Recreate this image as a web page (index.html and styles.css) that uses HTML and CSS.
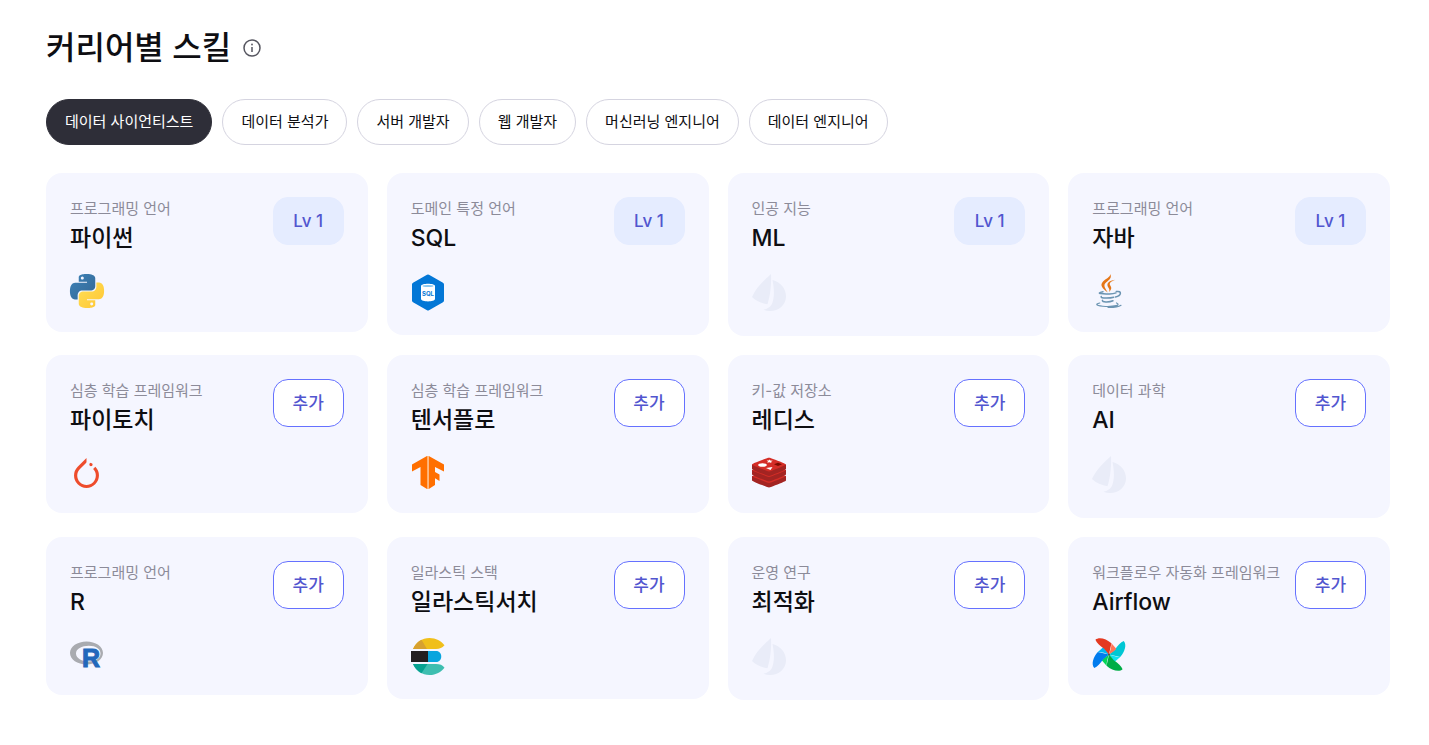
FILE: index.html
```html
<!DOCTYPE html>
<html lang="ko">
<head>
<meta charset="utf-8">
<meta name="viewport" content="width=device-width, initial-scale=1">
<title>커리어별 스킬</title>
<link rel="stylesheet" href="styles.css">
</head>
<body>
<svg class="defs" width="0" height="0" aria-hidden="true">
  <symbol id="boat" viewBox="0 0 34 38">
    <path fill="#e9ecf8" d="M19 0C13 5.500 4 13.500 0 23c4 4 10 6.500 15.500 7.200C18.300 22 19.600 9 19 0Z"/>
    <path fill="#e9ecf8" d="M20.500 6C29 8.200 34 15 34 22.500c0 10.500-11.500 17.500-22.500 13.300 4-1 6.300-2.500 8-5C22.600 25 22.400 15 20.500 6Z"/>
  </symbol>
</svg>
<main class="page">
  <header class="heading">
    <h1 class="heading-title">커리어별 스킬</h1>
    <button class="info" type="button" aria-label="안내">
      <svg width="18" height="18" viewBox="0 0 18 18" fill="none"><circle cx="9" cy="9" r="8" stroke="#55555f" stroke-width="1.500"/><path d="M9 8v5" stroke="#55555f" stroke-width="1.500"/><circle cx="9" cy="5.500" r=".9" fill="#55555f"/></svg>
    </button>
  </header>

  <nav class="filters" aria-label="커리어">
    <button class="filter filter-active" type="button" aria-pressed="true">데이터 사이언티스트</button>
    <button class="filter" type="button">데이터 분석가</button>
    <button class="filter" type="button">서버 개발자</button>
    <button class="filter" type="button">웹 개발자</button>
    <button class="filter" type="button">머신러닝 엔지니어</button>
    <button class="filter" type="button">데이터 엔지니어</button>
  </nav>

  <section class="grid">
    <article class="card">
      <div class="card-top">
        <div class="card-text"><p class="category">프로그래밍 언어</p><h2 class="name">파이썬</h2></div>
        <button class="action action-level" type="button">Lv 1</button>
      </div>
      <svg class="logo" width="34" height="34" viewBox="0 0 24 24">
        <defs>
          <linearGradient id="pyb" x1="0" y1="0" x2="1" y2="1"><stop offset="0" stop-color="#3d83b9"/><stop offset="1" stop-color="#346794"/></linearGradient>
          <linearGradient id="pyy" x1="1" y1="1" x2="0" y2="0"><stop offset="0" stop-color="#ffe058"/><stop offset="1" stop-color="#ffc533"/></linearGradient>
          <path id="snake" d="M14.25.18l.9.2.73.26.59.3.45.32.34.34.25.34.16.33.1.3.04.26.02.2-.01.13V8.5l-.05.63-.13.55-.21.46-.26.38-.3.31-.33.25-.35.19-.35.14-.33.1-.3.07-.26.04-.21.02H8.770l-.69.05-.59.14-.5.22-.41.27-.33.32-.27.35-.2.36-.15.37-.1.35-.07.32-.04.27-.02.21v3.060H3.170l-.21-.03-.28-.07-.32-.12-.35-.18-.36-.26-.36-.36-.35-.46-.32-.59-.28-.73-.21-.88-.14-1.050-.05-1.230.06-1.220.16-1.040.24-.87.32-.71.36-.57.4-.44.42-.33.42-.24.4-.16.36-.1.32-.05.24-.01h.16l.06.01h8.160v-.83H6.180l-.01-2.750-.02-.37.05-.34.11-.31.17-.28.25-.26.31-.23.38-.2.44-.18.51-.15.58-.12.64-.1.71-.06.77-.04.84-.02 1.270.05zm-6.300 1.980l-.23.33-.08.41.08.41.23.34.33.22.41.09.41-.09.33-.22.23-.34.08-.41-.08-.41-.23-.33-.33-.22-.41-.09-.41.09z"/>
        </defs>
        <use href="#snake" fill="url(#pyb)"/><use href="#snake" fill="url(#pyy)" transform="rotate(180 12 12)"/>
      </svg>
    </article>

    <article class="card">
      <div class="card-top">
        <div class="card-text"><p class="category">도메인 특정 언어</p><h2 class="name">SQL</h2></div>
        <button class="action action-level" type="button">Lv 1</button>
      </div>
      <svg class="logo" width="34" height="37" viewBox="0 0 34 37">
        <path fill="#0377d6" stroke="#0377d6" stroke-width="4" stroke-linejoin="round" d="M17 2.500 31 10.500V26.500L17 34.500 3 26.500V10.500Z"/>
        <path fill="#fff" d="M10 12v13c0 3.200 14 3.200 14 0V12c0-3-14-3-14 0Z"/>
        <ellipse cx="17" cy="12" rx="5.500" ry="1.100" fill="#8ac8f0"/>
        <text x="17" y="22" class="sql-mark">SQL</text>
      </svg>
    </article>

    <article class="card">
      <div class="card-top">
        <div class="card-text"><p class="category">인공 지능</p><h2 class="name">ML</h2></div>
        <button class="action action-level" type="button">Lv 1</button>
      </div>
      <svg class="logo" width="34" height="38"><use href="#boat"/></svg>
    </article>

    <article class="card">
      <div class="card-top">
        <div class="card-text"><p class="category">프로그래밍 언어</p><h2 class="name">자바</h2></div>
        <button class="action action-level" type="button">Lv 1</button>
      </div>
      <svg class="logo" width="34" height="34" viewBox="0 0 34 34" fill="none" stroke-linecap="round">
        <path fill="#e57617" d="M18.300 0c1.800 4-1.200 6-4 8.200-3 2.500-2.200 4.500 1.500 10.200-5.600-4.200-8.300-7.200-4.800-11 2.800-2.700 7.200-4.200 7.300-7.400Z"/>
        <path fill="#e57617" d="M23.300 5.800c-5 2-6.300 3.500-5 5.800 1.700 2.300 1.200 4-1.300 6.600.7-2 .6-2.800-.7-4.700-2.500-3.800.5-6.900 7-7.700Z"/>
        <g stroke="#6b94b2" stroke-width="1.500">
          <path d="M11 17.700c-9 1.800 1 2.500 6.500 2.200 2.500-.1 5-.5 6.500-1"/>
          <path d="M24.300 17.600c6-1.300 5.200 4.500-.8 5.400"/>
          <path d="M9.200 22.500c-1 2.200 9 1.800 12.500.8M10.500 26.300c-1 2 6.500 2.200 10.500.5"/>
          <path d="M7.800 29c-5.500 1.200-3.500 3.100 6 3.500 8.500.2 15.500-1.200 10.700-3.500M16 33.500c5.500.1 10.500-.5 13-2.200" stroke-width="1.200"/>
        </g>
      </svg>
    </article>

    <article class="card">
      <div class="card-top">
        <div class="card-text"><p class="category">심층 학습 프레임워크</p><h2 class="name">파이토치</h2></div>
        <button class="action" type="button">추가</button>
      </div>
      <svg class="logo" width="34" height="33" viewBox="0 0 34 33">
        <path fill="#ee4c2c" transform="translate(1.500 2) scale(1.250)" d="M12.005 0L4.952 7.053a9.865 9.865 0 000 14.022 9.866 9.866 0 0014.022 0c3.984-3.900 3.986-10.205.085-14.023l-1.744 1.743c2.904 2.905 2.904 7.634 0 10.538s-7.634 2.904-10.538 0-2.904-7.634 0-10.538l4.647-4.646.582-.665zm3.568 3.899a1.327 1.327 0 00-1.327 1.327 1.327 1.327 0 001.327 1.328A1.327 1.327 0 0016.900 5.226 1.327 1.327 0 0015.573 3.900z"/>
      </svg>
    </article>

    <article class="card">
      <div class="card-top">
        <div class="card-text"><p class="category">심층 학습 프레임워크</p><h2 class="name">텐서플로</h2></div>
        <button class="action" type="button">추가</button>
      </div>
      <svg class="logo" width="34" height="33" viewBox="0 0 34 33">
        <path fill="#ff6f00" d="M16 0 1 8.500v7l8.500-4.500v18L16 33Z"/>
        <path fill="#ff6f00" d="M17.800 0 33 8.500v7L24 11v5l4.500 2.500v6.500L24 22.300V29l-6.200 4Z"/>
        <path fill="#ffb06f" d="M16 0h1.800v33H16Z"/>
      </svg>
    </article>

    <article class="card">
      <div class="card-top">
        <div class="card-text"><p class="category">키-값 저장소</p><h2 class="name">레디스</h2></div>
        <button class="action" type="button">추가</button>
      </div>
      <svg class="logo" width="34" height="33" viewBox="0 0 34 33">
        <path fill="#a32422" d="M0 20v4.500c1.500 1.500 10 4.500 15 6.500 1.500.6 2.500.6 4 0 5-2 13.500-5 15-6.500V20Z"/>
        <path fill="#d42d27" d="M0 20l17-6 17 6c-1 1.300-10 4.500-15 6.500-1.500.6-2.500.6-4 0C10 24.500 1 21.300 0 20Z"/>
        <path fill="#a32422" d="M0 14v4.500c1.500 1.500 10 4.500 15 6.500 1.500.6 2.500.6 4 0 5-2 13.500-5 15-6.500V14Z"/>
        <path fill="#d42d27" d="M0 14l17-6 17 6c-1 1.300-10 4.500-15 6.500-1.500.6-2.500.6-4 0C10 18.500 1 15.300 0 14Z"/>
        <path fill="#a32422" d="M0 8.500V13c1.500 1.500 10 4.500 15 6.500 1.500.6 2.500.6 4 0 5-2 13.500-5 15-6.500V8.500Z"/>
        <path fill="#d42d27" d="M0 8.500C1 7.200 10 4 15 2.200c1.500-.5 2.500-.5 4 0 5 1.800 14 5 15 6.300-1 1.300-10 4.500-15 6.500-1.500.6-2.500.6-4 0C10 13 1 9.800 0 8.500Z"/>
        <ellipse cx="10.500" cy="9" rx="4.300" ry="1.800" fill="#fff"/>
        <path fill="#fff" d="m14 12 6.500-1-2 3Zm.6-7.600 2 .2 1-1.200.7 1.200 2.500.1-1.700 1 .3 1.200-2-.7-2.200.6.800-1.200Z"/>
        <path fill="#7a0c00" d="m22 8.300 4-1.600 4 1.600-4 1.700Z"/>
      </svg>
    </article>

    <article class="card">
      <div class="card-top">
        <div class="card-text"><p class="category">데이터 과학</p><h2 class="name">AI</h2></div>
        <button class="action" type="button">추가</button>
      </div>
      <svg class="logo" width="34" height="38"><use href="#boat"/></svg>
    </article>

    <article class="card">
      <div class="card-top">
        <div class="card-text"><p class="category">프로그래밍 언어</p><h2 class="name">R</h2></div>
        <button class="action" type="button">추가</button>
      </div>
      <svg class="logo" width="34" height="33" viewBox="0 0 34 33">
        <path fill="#a9abb0" fill-rule="evenodd" d="M16.500 3.500C25.600 3.500 33 8.500 33 15s-7.400 11.500-16.500 11.500S0 21.500 0 15 7.400 3.500 16.500 3.500Zm2.300 4.300C11.700 7.800 6 11 6 15.500s5.700 8 12.800 8S30.500 20 30.500 15.500s-4.600-7.700-11.700-7.700Z"/>
        <text x="12" y="29" class="r-mark">R</text>
      </svg>
    </article>

    <article class="card">
      <div class="card-top">
        <div class="card-text"><p class="category">일라스틱 스택</p><h2 class="name">일라스틱서치</h2></div>
        <button class="action" type="button">추가</button>
      </div>
      <svg class="logo" width="34" height="37" viewBox="0 0 34 37">
        <path fill="#f0bf1a" d="M2 11C5 4 11 0 18.500 0 25 0 30 3 33.500 7.300 31 10 29 11 25 11Z"/>
        <path fill="#d7a12f" d="M2 11C4 6.500 6.800 3.700 10.500 1.800L16 11Z"/>
        <path fill="#07a5de" d="M17 13h8c7 0 7 11 0 11h-8Z"/>
        <path fill="#231f20" d="M0 13h17v11H0Z"/>
        <path fill="#3ebeb0" d="M2 26h23c4 0 6.500 1 8.500 3.700C30 34 25 37 18.500 37 11 37 5 33 2 26Z"/>
        <path fill="#07a291" d="M2 26h14.500l-6 9.200C6.800 33.300 4 30.500 2 26Z"/>
      </svg>
    </article>

    <article class="card">
      <div class="card-top">
        <div class="card-text"><p class="category">운영 연구</p><h2 class="name">최적화</h2></div>
        <button class="action" type="button">추가</button>
      </div>
      <svg class="logo" width="34" height="38"><use href="#boat"/></svg>
    </article>

    <article class="card">
      <div class="card-top">
        <div class="card-text"><p class="category">워크플로우 자동화 프레임워크</p><h2 class="name">Airflow</h2></div>
        <button class="action" type="button">추가</button>
      </div>
      <svg class="logo" width="34" height="33" viewBox="0 0 34 34">
        <path fill="#00c7d4" d="M17 17 23 12C26 7.500 29 4.200 32.200 3 35.500 6.500 33.500 14 28.500 19.500Z"/>
        <path fill="#11e1ee" d="M17 17c3 1 7 2.500 11.500 2.500L23 24.500C21 23 19 20 17 17Z"/>
        <path fill="#00ad46" d="M17 17l5 6c4.500 3 7.800 6 9 9.200C27.500 35.500 20 33.500 14.500 28.500Z"/>
        <path fill="#04d659" d="M17 17c-1 3-2.500 7-2.500 11.500L9.500 23C11 21 14 19 17 17Z"/>
        <path fill="#017cee" d="M17 17l-6 5c-3 4.500-6 7.800-9.200 9C-1.500 27.500.5 20 5.500 14.500Z"/>
        <path fill="#00b7f4" d="M17 17c-3-1-7-2.500-11.500-2.500L11 9.500C13 11 15 14 17 17Z"/>
        <path fill="#e43921" d="M17 17l-5-6C7.500 8 4.200 5 3 1.800 6.500-1.500 14 .5 19.500 5.500Z"/>
        <path fill="#ff7557" d="M17 17c1-3 2.500-7 2.500-11.500L24.500 11C23 13 20 15 17 17Z"/>
        <circle cx="17" cy="17" r="1" fill="#51504f"/>
      </svg>
    </article>
  </section>
</main>
</body>
</html>
```

FILE: styles.css
```css
* {
  box-sizing: border-box;
}

body {
  margin: 0;
  background: #fff;
  color: #0e0e12;
  font-family: Inter, "Noto Sans CJK KR", sans-serif;
}

button {
  font-family: inherit;
  cursor: pointer;
}

.defs {
  display: none;
}

.page {
  padding: 24px 39px 40px 46px;
}

.heading {
  display: flex;
  align-items: center;
  gap: 12px;
}

.heading-title {
  margin: 0;
  font-size: 32px;
  font-weight: 500;
  line-height: 47px;
}

.info {
  display: flex;
  padding: 0;
  border: 0;
  background: none;
}

.filters {
  display: flex;
  flex-wrap: wrap;
  gap: 10px;
  margin-top: 28px;
}

.filter {
  height: 46px;
  padding: 0 18px;
  border: 1px solid #d5d4e0;
  border-radius: 23px;
  background: #fff;
  color: #0e0e12;
  font-size: 15px;
  line-height: 24px;
}

.filter-active {
  border-color: #2e2e38;
  background: #2e2e38;
  color: #fff;
}

.grid {
  display: grid;
  grid-template-columns: repeat(4, minmax(0, 1fr));
  align-items: start;
  gap: 19px;
  margin-top: 28px;
}

.card {
  padding: 24px;
  border-radius: 16px;
  background: #f5f6ff;
}

.card-top {
  display: flex;
  align-items: flex-start;
  justify-content: space-between;
}

.card-text {
  min-width: 0;
}

.category {
  margin: 0;
  color: #8c8b99;
  font-size: 15px;
  line-height: 24px;
  white-space: nowrap;
}

.name {
  margin: 0;
  font-size: 23px;
  font-weight: 500;
  line-height: 34px;
}

.action {
  flex: none;
  min-width: 71px;
  height: 48px;
  padding: 0 18px 3px;
  border: 1px solid #6571ff;
  border-radius: 15px;
  background: #fff;
  color: #5256cf;
  font-size: 17px;
  font-weight: 500;
}

.action-level {
  padding-bottom: 0;
  border-color: #e5ecff;
  background: #e5ecff;
}

.logo {
  display: block;
  margin-top: 19px;
  overflow: visible;
}

.sql-mark {
  fill: #0377d6;
  font-size: 6px;
  font-weight: 700;
  text-anchor: middle;
}

.r-mark {
  fill: #2268bb;
  stroke: #2268bb;
  stroke-width: 1;
  font-family: "Liberation Sans", sans-serif;
  font-size: 25px;
  font-weight: 700;
}
```
